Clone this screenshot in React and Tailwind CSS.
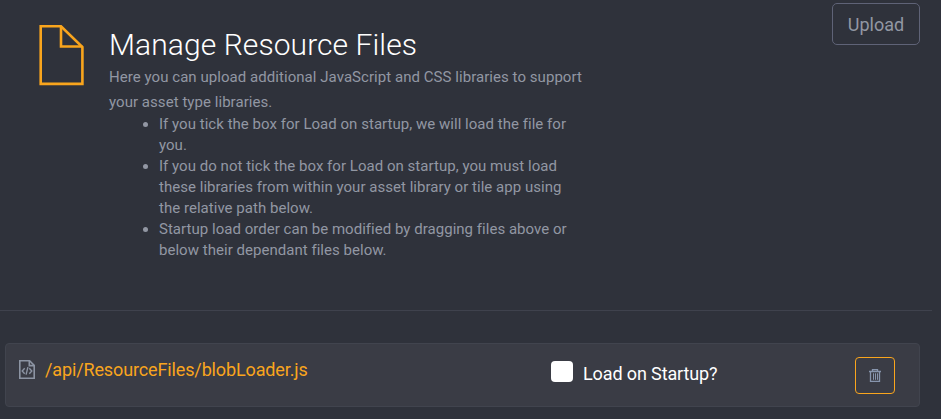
const notes = [
  'If you tick the box for Load on startup, we will load the file for you.',
  'If you do not tick the box for Load on startup, you must load these libraries from within your asset library or tile app using the relative path below.',
  'Startup load order can be modified by dragging files above or below their dependant files below.',
];

function PageIcon() {
  return (
    <svg className="mt-[25px] h-[61px] w-[45px] shrink-0" viewBox="0 0 45 61" fill="none" stroke="#f9a51d" strokeWidth="2.6">
      <path d="M1.7 1.3H22L43.4 22V58.9H1.7Z" />
      <path d="M22 1.3V21.5H43.4" />
    </svg>
  );
}

function CodeFileIcon() {
  return (
    <svg className="mt-4 h-[19px] w-4 shrink-0" viewBox="0 0 16 19" fill="none" stroke="#8c94a3" strokeWidth="1.6">
      <path d="M.8.8H10.6L15.2 5.4V18.2H.8Z" />
      <path d="M10.3.8V5.6H15.2" />
      <path d="M5.7 8.3 3.2 11 5.7 13.7M10.3 8.3 12.8 11 10.3 13.7M8.9 7.2 7.1 14.6" strokeWidth="1.4" />
    </svg>
  );
}

function TrashIcon() {
  return (
    <svg className="h-[13px] w-3" viewBox="0 0 12 13" fill="none" stroke="#8795ad" strokeWidth="1.3">
      <path d="M0 2.5H12M3.5 2.5V.7H8.5V2.5M1.5 2.5V12.3H10.5V2.5" />
      <path d="M4.5 4.3V10.8M6.5 4.3V10.8M8.5 4.3V10.8" strokeWidth="1" />
    </svg>
  );
}

export default function App() {
  return (
    <main className="h-[419px] w-[941px] overflow-hidden bg-[#2f323b] font-['Roboto',sans-serif] text-[#9297a3]">
      <header className="flex h-[310px] items-start pl-[39px] pr-[21px]">
        <PageIcon />
        <section className="ml-[25px] w-[480px] pt-[26px] text-[15px] tracking-[0.05px]">
          <h1 className="h-[39px] text-[30px] font-light leading-[38px] tracking-[0.08px] text-white">Manage Resource Files</h1>
          <p className="mb-[-1px] leading-[25px]">Here you can upload additional JavaScript and CSS libraries to support your asset type libraries.</p>
          <ul className="w-[470px] list-disc pl-[50px] leading-[21px] tracking-[0.03px]">
            {notes.map((n) => <li key={n}>{n}</li>)}
          </ul>
        </section>
        <button className="ml-auto mt-[3px] h-[42px] w-[88px] rounded-[5px] border border-[#5f6377] text-[18px]">Upload</button>
      </header>
      <hr className="w-[932px] border-[#3f424d]" />
      <div className="ml-[5px] mt-8 flex h-16 w-[915px] items-start rounded border border-[#41444e] bg-[#3a3c45] pl-[13px]">
        <CodeFileIcon />
        <a className="ml-[10px] mt-3 w-[506px] text-[18px] leading-[27px] tracking-[-0.13px] text-[#f9a51d]">/api/ResourceFiles/blobLoader.js</a>
        <label className="mt-4 flex items-start text-[18px] leading-[27px] tracking-[-0.12px] text-white">
          <span className="mr-[10px] mt-px h-[21px] w-[22px] rounded bg-white" />
          Load on Startup?
        </label>
        <button className="ml-auto mr-6 mt-[13px] flex h-[37px] w-10 items-center justify-center rounded border border-[#f9a51d]"><TrashIcon /></button>
      </div>
    </main>
  );
}
